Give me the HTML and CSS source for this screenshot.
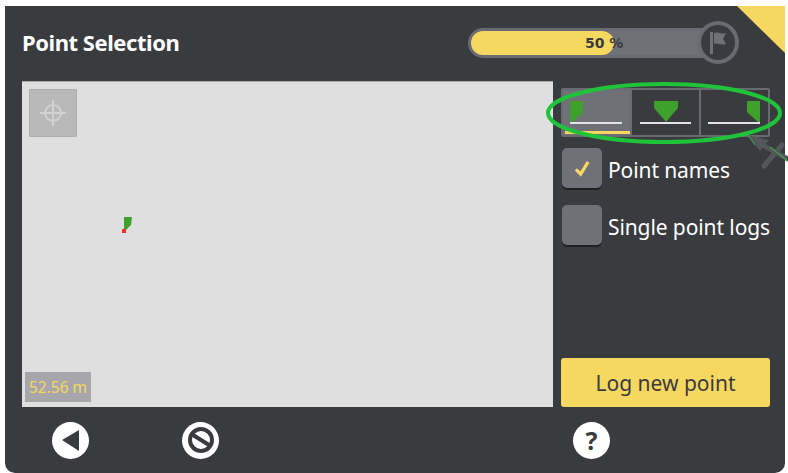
FILE: index.html
```html
<!DOCTYPE html>
<html>
<head>
    <meta charset="UTF-8">
    <title>Point Selection</title>
    <link rel="stylesheet" href="styles.css">
</head>
<body>
    <div class="screen">
        <div class="corner"></div>

        <header class="top-bar">
            <h1 class="title">Point Selection</h1>
            <div class="progress">
                <div class="progress-track">
                    <div class="progress-fill"></div>
                    <span class="progress-label">50 %</span>
                </div>
                <div class="progress-flag">
                    <svg width="18" height="23" viewBox="0 0 18 23">
                        <path d="M1 1h3v22H1z" fill="#6f7078"/>
                        <path d="M5 2c4-2 7 2 12 0l-3 6 3 5c-5 2-8-2-12 0z" fill="#6f7078"/>
                    </svg>
                </div>
            </div>
        </header>

        <main class="content">
            <div class="map">
                <button class="center-btn">
                    <svg width="28" height="28" viewBox="0 0 28 28" fill="none" stroke="#d2d2d2" stroke-width="2">
                        <circle cx="14" cy="14" r="8"/>
                        <path d="M14 1v26M1 14h26"/>
                    </svg>
                </button>
                <svg class="map-pin" width="12" height="18" viewBox="0 0 12 18">
                    <path d="M3 0h8l-1 8-5 5H3z" fill="#3fa02c"/>
                    <rect x="1" y="12" width="4" height="4" fill="#e8322a"/>
                </svg>
                <div class="scale">52.56 m</div>
            </div>

            <aside class="side">
                <div class="segments">
                    <button class="segment active">
                        <svg width="56" height="34" viewBox="0 0 56 34">
                            <path d="M1 3h13v12L3 24H1z" fill="#3fa02c"/>
                            <rect x="1" y="24" width="52" height="2" fill="#e4e4e4"/>
                        </svg>
                    </button>
                    <button class="segment">
                        <svg width="56" height="34" viewBox="0 0 56 34">
                            <path d="M16 3h24v7L28 24 16 10z" fill="#3fa02c"/>
                            <rect x="2" y="24" width="51" height="2" fill="#e4e4e4"/>
                        </svg>
                    </button>
                    <button class="segment">
                        <svg width="56" height="34" viewBox="0 0 56 34">
                            <path d="M40 3h13v21h-2L40 14z" fill="#3fa02c"/>
                            <rect x="1" y="24" width="52" height="2" fill="#e4e4e4"/>
                        </svg>
                    </button>
                </div>

                <label class="check-row">
                    <span class="check-box">
                        <svg width="17" height="17" viewBox="0 0 18 18" fill="none" stroke="#f6d860" stroke-width="3.4">
                            <path d="M2 10l5 5 8-13"/>
                        </svg>
                    </span>
                    <span class="check-text">Point names</span>
                </label>
                <label class="check-row">
                    <span class="check-box"></span>
                    <span class="check-text">Single point logs</span>
                </label>

                <button class="log-btn">Log new point</button>
            </aside>
        </main>

        <footer class="bottom-bar">
            <button class="round-btn">
                <svg width="22" height="24" viewBox="0 0 22 24"><path d="M2 12L19 2v21z" fill="#3a3b3f"/></svg>
            </button>
            <button class="round-btn">
                <svg width="28" height="28" viewBox="0 0 28 28" fill="none" stroke="#3a3b3f" stroke-width="4">
                    <circle cx="14" cy="14" r="11"/>
                    <path d="M6 9l16 10"/>
                </svg>
            </button>
            <button class="round-btn help">?</button>
        </footer>
    </div>

    <!-- green ring and pointer drawn over the screenshot -->
    <svg class="annotation" width="788" height="473" viewBox="0 0 788 473" fill="none">
        <path d="M748 135l21 5-9 11z" fill="#55565a"/>
        <path d="M757 142l31 17M764 166l18-21" stroke="#55565a" stroke-width="5" stroke-linecap="round"/>
        <path d="M748 135l7 10M770 147l18 14" stroke="#2fc043" stroke-width="1"/>
        <ellipse cx="664" cy="113" rx="116" ry="29" stroke="#1fc43a" stroke-width="4"/>
    </svg>
</body>
</html>
```

FILE: styles.css
```css
body {
    margin: 0;
    background-color: #fff;
    font-family: "Noto Sans", sans-serif;
    width: 788px;
    height: 473px;
    overflow: hidden;
    position: relative;
}
button {
    border: none;
    padding: 0;
    font-family: inherit;
}
.screen {
    position: relative;
    margin: 6px 0 0 5px;
    width: 780px;
    height: 467px;
    background: #3a3b3f;
    border-radius: 0 0 10px 10px;
    overflow: hidden;
}
.corner {
    position: absolute;
    top: 0;
    right: 0;
    width: 48px;
    height: 47px;
    background: #f6d860;
    clip-path: polygon(0 0, 100% 0, 100% 100%);
}
.top-bar {
    display: flex;
    align-items: center;
    justify-content: space-between;
    height: 75px;
    padding: 0 46px 2px 17px;
    box-sizing: border-box;
}
.title {
    margin: 0 0 2px;
    font-size: 22px;
    font-weight: 700;
    letter-spacing: -0.45px;
    color: #fff;
}
.progress {
    display: flex;
    align-items: center;
    width: 271px;
}
.progress-track {
    position: relative;
    width: 240px;
    height: 30px;
    box-sizing: border-box;
    border: 3px solid #6a6b72;
    border-radius: 15px 0 0 15px;
    background: #6f7078;
}
.progress-fill {
    width: 143px;
    height: 100%;
    background: #f6d860;
    border-radius: 12px;
}
.progress-label {
    position: absolute;
    top: 0;
    left: 114px;
    font-family: "DejaVu Sans", sans-serif;
    font-size: 14px;
    font-weight: 700;
    line-height: 24px;
    color: #3a3b3f;
}
.progress-flag {
    position: relative;
    display: flex;
    align-items: center;
    justify-content: center;
    width: 42px;
    height: 43px;
    margin-left: -11px;
    box-sizing: border-box;
    border: 4px solid #6a6b72;
    border-radius: 50%;
    background: #3a3b3f;
}
.content {
    display: flex;
    gap: 8px;
    padding-left: 17px;
}
.map {
    position: relative;
    width: 531px;
    height: 326px;
    background: #dfdfdf;
    border-top: 1px solid #a9a9ab;
    box-sizing: border-box;
}
.center-btn {
    position: absolute;
    top: 7px;
    left: 7px;
    display: flex;
    align-items: center;
    justify-content: center;
    width: 48px;
    height: 48px;
    background: #b9b9b9;
    border: 1px solid #adadad;
    border-radius: 1px;
    box-sizing: border-box;
}
.map-pin {
    position: absolute;
    top: 135px;
    left: 99px;
}
.scale {
    position: absolute;
    left: 3px;
    bottom: 5px;
    width: 66px;
    height: 30px;
    background: #a7a7ab;
    color: #f6d860;
    font-size: 15.5px;
    line-height: 30px;
    text-align: center;
}
.side {
    display: flex;
    flex-direction: column;
    width: 209px;
    height: 326px;
}
.segments {
    display: flex;
    height: 49px;
    margin-top: 7px;
    box-sizing: border-box;
    border: 2px solid #6a6b72;
    border-radius: 2px;
}
.segment {
    flex: 1;
    position: relative;
    background: #3a3b3f;
    border-left: 2px solid #6a6b72;
}
.segment:first-child {
    border-left: none;
}
.segment svg {
    display: block;
    margin: 5px auto 0;
}
.segment.active {
    background: #6f7078;
}
.segment.active::after {
    content: "";
    position: absolute;
    left: 2px;
    right: 0;
    bottom: 1px;
    height: 3px;
    background: #f6d860;
}
.check-row {
    display: flex;
    align-items: center;
    gap: 6px;
    height: 40px;
    margin: 11px 0 6px 1px;
    font-size: 21px;
    color: #fff;
    white-space: nowrap;
}
.check-text {
    padding-top: 4px;
    letter-spacing: -0.1px;
}
.check-box {
    display: flex;
    flex: none;
    align-items: center;
    justify-content: center;
    width: 40px;
    height: 40px;
    background: #6f7078;
    border-radius: 5px;
    box-shadow: 0 2px 0 #1f2023;
}
.log-btn {
    width: 209px;
    height: 49px;
    margin-top: auto;
    background: #f6d860;
    border-radius: 3px;
    color: #3a3b3f;
    font-size: 21px;
}
.bottom-bar {
    display: flex;
    align-items: center;
    gap: 93px;
    height: 66px;
    padding-left: 47px;
}
.round-btn {
    display: flex;
    align-items: center;
    justify-content: center;
    width: 37px;
    height: 37px;
    background: #fff;
    border-radius: 50%;
    color: #3a3b3f;
}
.round-btn.help {
    margin-left: 261px;
    font-size: 25px;
    font-weight: 700;
}
.annotation {
    position: absolute;
    top: 0;
    left: 0;
}
```
